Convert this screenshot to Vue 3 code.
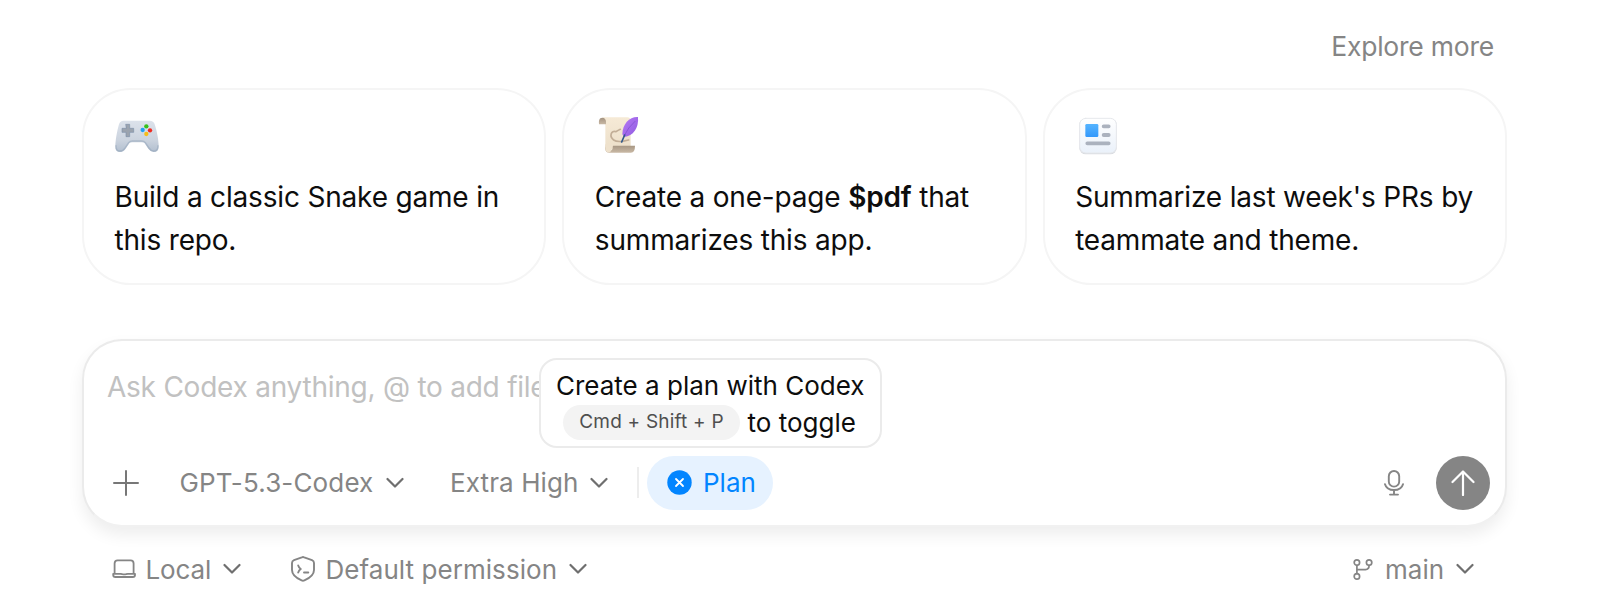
<script setup>
import { ref } from 'vue';

const prompt = ref('');

// Suggested prompts
const suggestions = [
  { icon: 'gamepad', lines: ['Build a classic Snake game in', 'this repo.'] },
  { icon: 'scroll', lines: ['Create a one-page <b>$pdf</b> that', 'summarizes this app.'] },
  { icon: 'news', lines: ["Summarize last week's PRs by", 'teammate and theme.'] }
];
</script>

<template>
  <div class="home">
    <div class="explore"><a class="explore-link">Explore more</a></div>

    <section class="cards">
      <article v-for="item in suggestions" :key="item.icon" class="card">
        <svg v-if="item.icon === 'gamepad'" class="card-icon" viewBox="0 0 144 144">
          <defs>
            <linearGradient id="pad" x1="0" y1="0" x2="0" y2="1">
              <stop offset="0" stop-color="#dce2eb" />
              <stop offset="0.6" stop-color="#ccd4df" />
              <stop offset="1" stop-color="#b2bfcf" />
            </linearGradient>
          </defs>
          <path d="M26 26H104Q116 26 119 37C126 58 131 85 131 104Q131 120 116 120Q107 120 100 110L89 94Q86 91 80 91H52Q46 91 43 94L32 110Q25 120 15 120Q1 120 1 104C1 85 6 58 12 37Q15 26 26 26Z" fill="url(#pad)" />
          <path d="M3 101C2 116 10 117 15 117Q24 117 30 108L41 92Q45 87 52 87H80Q87 87 91 92L102 108Q108 117 116 117Q129 117 129 101" fill="none" stroke="#93a5ba" stroke-opacity="0.55" stroke-width="4" />
          <path d="M33 37H44V49H56V61H44V74H33V61H21V49H33Z" fill="#9ba3ae" stroke="#7f91a9" stroke-width="2" stroke-linejoin="round" />
          <circle cx="94" cy="43" r="6.5" fill="#37c11c" />
          <circle cx="105" cy="55" r="6.5" fill="#ef2b20" />
          <circle cx="94" cy="66" r="6.5" fill="#f6bd18" />
          <circle cx="83" cy="54" r="6.5" fill="#22a0f2" />
        </svg>

        <svg v-else-if="item.icon === 'scroll'" class="card-icon" viewBox="0 0 144 144">
          <defs>
            <linearGradient id="paper" x1="0" y1="0" x2="0" y2="1">
              <stop offset="0" stop-color="#f6ead6" />
              <stop offset="1" stop-color="#ecdfc9" />
            </linearGradient>
            <linearGradient id="roll" x1="0" y1="0" x2="0" y2="1">
              <stop offset="0" stop-color="#a3927f" />
              <stop offset="1" stop-color="#c9b9a5" />
            </linearGradient>
            <linearGradient id="feather" x1="0" y1="0" x2="1" y2="1">
              <stop offset="0" stop-color="#b678f5" />
              <stop offset="1" stop-color="#8f5ce0" />
            </linearGradient>
          </defs>
          <path d="M22 16H97Q107 16 107 27V112H44Q31 119 31 105V31Q30 20 22 16Z" fill="url(#paper)" />
          <path d="M22 17C12 18 11 25 12 37H33V29C33 22 29 17 22 17Z" fill="url(#roll)" />
          <path d="M31 98V110Q31 122 43 122H108Q120 122 120 101H53V110Q51 115 46 115Q31 116 31 98Z" fill="url(#roll)" />
          <path d="M31 96V110Q32 121 42 121Q50 120 52 104L57 96Z" fill="#eee1cc" />
          <path d="M76 52Q64 58 63 59C48 53 42 74 56 84Q64 90 82 88L101 84" fill="none" stroke="#c2ae97" stroke-width="5" stroke-linecap="round" stroke-linejoin="round" />
          <path d="M129 15C105 13 82 35 82 67L88 75C114 72 132 49 129 15Z" fill="url(#feather)" />
          <path d="M120 28Q99 46 87 72" fill="none" stroke="#7c4bca" stroke-width="2" />
          <path d="M89 69L80 90" fill="none" stroke="#31598a" stroke-width="5" stroke-linecap="round" />
        </svg>

        <svg v-else class="card-icon" viewBox="0 0 144 144">
          <defs>
            <linearGradient id="sheet" x1="0" y1="0" x2="0" y2="1">
              <stop offset="0" stop-color="#ffffff" />
              <stop offset="1" stop-color="#eaf1fa" />
            </linearGradient>
            <linearGradient id="photo" x1="0" y1="0" x2="0" y2="1">
              <stop offset="0" stop-color="#55b4ff" />
              <stop offset="1" stop-color="#3398fb" />
            </linearGradient>
          </defs>
          <rect x="13" y="20" width="112" height="107" rx="19" fill="#d9dce1" />
          <rect x="14" y="19" width="110" height="104" rx="18" fill="url(#sheet)" stroke="#e6e8ec" stroke-width="3" />
          <rect x="31" y="36" width="39" height="39" rx="4" fill="url(#photo)" />
          <path d="M86 43H101M86 69H101M37 94H101" stroke="#abb2be" stroke-width="11.5" stroke-linecap="round" />
        </svg>

        <p class="card-text">
          <span v-for="line in item.lines" :key="line" v-html="line"></span>
        </p>
      </article>
    </section>

    <section class="composer">
      <input v-model="prompt" class="prompt" type="text" placeholder="Ask Codex anything, @ to add files" />

      <div class="toolbar">
        <svg class="plus" viewBox="0 0 26 26"><path d="M13 1V25M1 13H25" /></svg>
        <button class="select model">
          <span>GPT-5.3-Codex</span>
          <svg class="chevron" viewBox="0 0 18 12"><path d="M1.5 2L9 9.5L16.5 2" /></svg>
        </button>
        <button class="select effort">
          <span>Extra High</span>
          <svg class="chevron" viewBox="0 0 18 12"><path d="M1.5 2L9 9.5L16.5 2" /></svg>
        </button>
        <i class="divider"></i>
        <button class="plan">
          <svg class="plan-icon" viewBox="0 0 25 25">
            <circle cx="12.5" cy="12.5" r="12.2" />
            <path d="M9 9L16 16M16 9L9 16" />
          </svg>
          <span>Plan</span>
        </button>
        <svg class="mic" viewBox="0 0 20 26">
          <rect x="4.8" y="1" width="10.4" height="15.6" rx="5.2" />
          <path d="M1 14.2C3.2 22 16.8 22 19 14.2M10 20V24.5M6 24.6H14" />
        </svg>
        <button class="send">
          <svg viewBox="0 0 24 26"><path d="M12 25V1.5M1.5 12L12 1.5L22.5 12" /></svg>
        </button>
      </div>

      <div class="tooltip">
        <div class="tip-title">Create a plan with Codex</div>
        <div class="tip-row">
          <kbd>Cmd + Shift + P</kbd>
          <span>to toggle</span>
        </div>
      </div>
    </section>

    <footer class="status">
      <svg class="laptop" viewBox="0 0 24 20">
        <path d="M2.6 14V4.4Q2.6 1.4 5.6 1.4H18.6Q21.6 1.4 21.6 4.4V14M1.2 14.8H8.5Q9.5 14.8 10.3 15.1Q12.2 15.7 14 15.1Q14.8 14.8 16 14.8H23V16Q23 18 20.8 18H3.4Q1.2 18 1.2 16Z" />
      </svg>
      <button class="select local">
        <span>Local</span>
        <svg class="chevron" viewBox="0 0 18 12"><path d="M1.5 2L9 9.5L16.5 2" /></svg>
      </button>
      <svg class="shield" viewBox="0 0 24 26">
        <path d="M10.8 1.3Q12 .8 13.2 1.3L21 4.1Q23 4.9 23 7V14C23 18.5 20 21.5 13.4 24.4Q12 25 10.6 24.4C4 21.5 1 18.5 1 14V7Q1 4.9 3 4.1Z" />
        <path d="M7.2 9.5Q8 12 9.8 13Q8 14 7.2 16.5M13 16.5H17.3" />
      </svg>
      <button class="select permission">
        <span>Default permission</span>
        <svg class="chevron" viewBox="0 0 18 12"><path d="M1.5 2L9 9.5L16.5 2" /></svg>
      </button>
      <svg class="branch" viewBox="0 0 20 21">
        <circle cx="3.9" cy="3.6" r="2.7" />
        <circle cx="3.9" cy="17.4" r="2.7" />
        <circle cx="16.1" cy="3.6" r="2.7" />
        <path d="M3.9 6.3V14.7M3.9 10.6H12.5Q16.1 10.6 16.1 6.3" />
      </svg>
      <button class="select main">
        <span>main</span>
        <svg class="chevron" viewBox="0 0 18 12"><path d="M1.5 2L9 9.5L16.5 2" /></svg>
      </button>
    </footer>
  </div>
</template>

<style>
body { background: #fff; }
</style>

<style scoped>
.home {
  --muted: #858585;
  --blue: #0285ff;

  box-sizing: border-box;
  width: 1600px;
  height: 611px;
  padding: 28px 93px 0 82px;
  overflow: hidden;
  background: #fff;
  color: #0d0d0d;
  font-family: Inter, 'Liberation Sans', sans-serif;
}
.home * { box-sizing: border-box; }
.home svg { flex-shrink: 0; fill: none; stroke-linecap: round; stroke-linejoin: round; display: block; }
button { background: none; border: 0; padding: 0; font: inherit; color: inherit; cursor: pointer; }

.explore { display: flex; justify-content: flex-end; height: 60px; padding-right: 13px; }
.explore-link {
  font-size: 26.5px;
  line-height: 37px;
  letter-spacing: -0.22px;
  color: var(--muted);
}

/* Cards */
.cards { display: grid; grid-template-columns: repeat(3, 1fr); gap: 16px; }
.card {
  height: 197px;
  padding: 22px 0 0 30.5px;
  border: 2px solid #f5f5f5;
  border-radius: 49px;
}
.card-icon { width: 48px; height: 48px; }
.card-text {
  margin: 16px 0 0;
  font-size: 28px;
  line-height: 43px;
  letter-spacing: -0.18px;
  white-space: nowrap;
}
.card-text span { display: block; }
.card-text :deep(b) { font-weight: 600; }

/* Composer */
.composer {
  position: relative;
  height: 188px;
  margin-top: 54px;
  padding: 26px 15px 0 23px;
  border: 2px solid #ebebeb;
  border-bottom-color: #f1f1f1;
  border-radius: 40px;
  background: #fff;
  box-shadow: 0 8px 16px rgba(0, 0, 0, 0.07);
}
.prompt {
  display: block;
  width: 100%;
  height: 40px;
  padding: 0;
  border: 0;
  outline: 0;
  background: none;
  font: 28px/40px Inter, sans-serif;
  letter-spacing: -0.24px;
  color: inherit;
}
.prompt::placeholder { color: #c1c1c1; opacity: 1; }
.toolbar { display: flex; align-items: center; height: 54px; margin-top: 48.5px; font-size: 26px; color: var(--muted); }
.plus { width: 26px; height: 26px; margin-left: 5.5px; stroke: #777; stroke-width: 2; }
.select { display: flex; align-items: center; justify-content: space-between; white-space: nowrap; }
.chevron { width: 18px; height: 12px; stroke: #6f6f6f; stroke-width: 2.2; }
.model { width: 224px; margin-left: 41px; letter-spacing: 0.15px; }
.effort { width: 158px; margin-left: 46.5px; letter-spacing: 0.1px; }
.divider { width: 2px; height: 31px; margin-left: 29px; background: #ededed; }
.plan {
  display: flex;
  align-items: center;
  gap: 11px;
  width: 126px;
  height: 54px;
  margin-left: 8px;
  padding-left: 20px;
  border-radius: 27px;
  background: #e6f2ff;
  color: var(--blue);
}
.plan-icon { width: 25px; height: 25px; }
.plan-icon circle { fill: var(--blue); }
.plan-icon path { stroke: #fff; stroke-width: 1.8; }
.mic { width: 20px; height: 26px; margin-left: auto; stroke: var(--muted); stroke-width: 1.9; }
.send {
  display: flex;
  align-items: center;
  justify-content: center;
  width: 54px;
  height: 54px;
  margin-left: 32px;
  border-radius: 50%;
  background: var(--muted);
}
.send svg { width: 24px; height: 26px; stroke: #fff; stroke-width: 2.2; }

/* Tooltip over the composer */
.tooltip {
  position: absolute;
  left: 455px;
  top: 17px;
  width: 343px;
  height: 90px;
  padding: 8px 15px 6px;
  border: 2px solid #ebebeb;
  border-radius: 18px;
  background: #fff;
  font-size: 26px;
  white-space: nowrap;
}
.tip-title { line-height: 36px; }
.tip-row { display: flex; align-items: center; gap: 7.5px; height: 36px; padding-left: 7px; }
kbd {
  width: 177px;
  height: 35px;
  border-radius: 17.5px;
  background: #f3f3f3;
  color: #4f4f4f;
  font: 19px/34px Inter, sans-serif;
  letter-spacing: 0.2px;
  text-align: center;
}

/* Status row */
.status { display: flex; align-items: center; height: 40px; margin-top: 22px; padding: 0 33px 0 29.5px; font-size: 26px; color: var(--muted); }
.laptop { width: 24px; height: 20px; stroke: var(--muted); stroke-width: 1.8; }
.local { width: 95px; margin-left: 10px; letter-spacing: -0.15px; }
.shield { width: 24px; height: 26px; margin-left: 50px; stroke: var(--muted); stroke-width: 1.9; }
.permission { width: 261px; margin-left: 11px; letter-spacing: 0.05px; }
.branch { width: 20px; height: 21px; margin-left: auto; stroke: var(--muted); stroke-width: 1.7; }
.main { width: 89px; margin-left: 12px; }
</style>
